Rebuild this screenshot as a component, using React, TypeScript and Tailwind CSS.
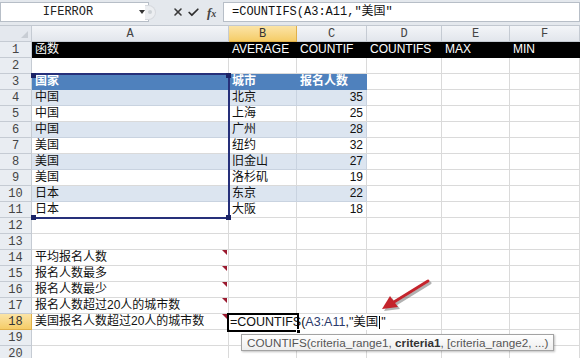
import { X, Check } from "lucide-react";

const colW = ["w-[197px]", "w-[68px]", "w-[70px]", "w-[75px]", "w-[68px]", "w-[70px]"];
const letters = ["A", "B", "C", "D", "E", "F"];

const table: [string, string, string][] = [
  ["中国", "北京", "35"],
  ["中国", "上海", "25"],
  ["中国", "广州", "28"],
  ["美国", "纽约", "32"],
  ["美国", "旧金山", "27"],
  ["美国", "洛杉矶", "19"],
  ["日本", "东京", "22"],
  ["日本", "大阪", "18"],
];

const labels: Record<number, string> = {
  14: "平均报名人数",
  15: "报名人数最多",
  16: "报名人数最少",
  17: "报名人数超过20人的城市数",
  18: "美国报名人数超过20人的城市数",
};

const mono = "font-['Liberation_Mono','Noto_Sans_CJK_SC',monospace]";

function RowHead({ n }: { n: number }) {
  const active = n === 18;
  return (
    <div
      className={`w-[32px] h-[16px] shrink-0 flex items-center justify-center border-r border-b text-[12px] leading-none ${mono} ${
        active
          ? "bg-gradient-to-b from-[#fbe4a6] to-[#f5cc66] border-[#e0b04a] text-[#333]"
          : "bg-[#e9edf2] border-[#c5cbd3] text-[#444]"
      }`}
    >
      {n}
    </div>
  );
}

function Cell({
  w,
  children,
  cls = "bg-white border-[#dadada]",
  right = false,
}: {
  w: string;
  children?: React.ReactNode;
  cls?: string;
  right?: boolean;
}) {
  return (
    <div
      className={`${w} h-[16px] shrink-0 border-r border-b flex items-end pb-[1px] px-[3px] text-[12px] leading-[14px] whitespace-nowrap overflow-visible relative ${
        right ? "justify-end" : ""
      } ${cls}`}
    >
      {children}
    </div>
  );
}

function Row({ n }: { n: number }) {
  let cells: React.ReactNode[] = [];
  if (n === 1) {
    const t = ["函数", "AVERAGE", "COUNTIF", "COUNTIFS", "MAX", "MIN"];
    cells = t.map((s, i) => (
      <Cell key={i} w={colW[i]} cls="bg-black border-black text-white">
        {s}
      </Cell>
    ));
  } else if (n === 3) {
    const t = ["国家", "城市", "报名人数"];
    cells = colW.map((w, i) =>
      i < 3 ? (
        <Cell key={i} w={w} cls="bg-[#4f81bd] border-[#4f81bd] text-white font-bold">
          {t[i]}
        </Cell>
      ) : (
        <Cell key={i} w={w} />
      )
    );
  } else if (n >= 4 && n <= 11) {
    const r = table[n - 4];
    const band = n % 2 === 0 ? "bg-[#dce5f0] border-[#c9d3e0]" : "bg-white border-[#dadada]";
    cells = colW.map((w, i) =>
      i < 3 ? (
        <Cell key={i} w={w} cls={`${band} text-[#111]`} right={i === 2}>
          {r[i]}
        </Cell>
      ) : (
        <Cell key={i} w={w} />
      )
    );
  } else {
    cells = colW.map((w, i) => (
      <Cell key={i} w={w} cls="bg-white border-[#dadada] text-[#111]">
        {i === 0 && labels[n]}
        {i === 0 && labels[n] && (
          <span className="absolute right-[1px] top-0 w-0 h-0 border-l-[5px] border-l-transparent border-t-[5px] border-t-[#9b1b30]" />
        )}
      </Cell>
    ));
  }
  return (
    <div className="flex">
      <RowHead n={n} />
      {cells}
    </div>
  );
}

export default function App() {
  const rows = Array.from({ length: 20 }, (_, i) => i + 1);
  return (
    <div className="w-[580px] h-[358px] overflow-hidden bg-white relative font-['Liberation_Sans','Noto_Sans_CJK_SC',sans-serif]">
      {/* formula bar */}
      <div className="h-[26px] flex items-start pt-[2px] bg-[#e4e8ed] border-b border-[#c2c8d0]">
        <div className={`w-[149px] h-[20px] bg-white border border-[#b7bec7] flex items-center ${mono} text-[12px] text-[#222]`}>
          <span className="w-[134px] text-center">IFERROR</span>
          <span className="w-0 h-0 ml-[4px] border-l-[3px] border-r-[3px] border-t-[4px] border-l-transparent border-r-transparent border-t-[#333]" />
        </div>
        <div className="w-[74px] h-[20px] flex items-center">
          <span className="w-[11px] h-[15px] -ml-[4px] rounded-r-full border border-l-0 border-[#d6d9de] bg-[#eceef1] flex items-center justify-center">
            <span className="w-[4px] h-[4px] rounded-full bg-[#cdd1d6]" />
          </span>
          <div className="flex items-center gap-[3px] ml-[16px]">
            <X size={12} strokeWidth={3.2} className="text-[#3a3a3a]" />
            <Check size={13} strokeWidth={3.2} className="text-[#2e2e2e]" />
            <span className="ml-[4px] font-['Liberation_Serif',serif] italic font-bold text-[13px] text-[#444] leading-none">
              f<span className="text-[10px]">x</span>
            </span>
          </div>
        </div>
        <div className={`flex-1 h-[20px] bg-white border border-[#b7bec7] flex items-center pl-[8px] ${mono} text-[12px] text-[#111] whitespace-nowrap`}>
          =COUNTIFS(A3:A11,"美国"
        </div>
      </div>

      {/* column headers */}
      <div className="flex">
        <div className="w-[32px] h-[16px] shrink-0 bg-[#e4e8ee] border-r border-b border-[#c5cbd3] flex items-end justify-end pr-[3px] pb-[3px]">
          <span className="w-0 h-0 border-l-[7px] border-l-transparent border-b-[7px] border-b-[#c8cdd4]" />
        </div>
        {colW.map((w, i) => (
          <div
            key={i}
            className={`${w} h-[16px] shrink-0 border-r border-b flex items-center justify-center text-[12px] ${mono} ${
              i === 1
                ? "bg-gradient-to-b from-[#fbe4a6] to-[#f5cc66] border-[#e0b04a] text-[#333]"
                : "bg-gradient-to-b from-[#f3f5f8] to-[#e2e6ec] border-[#c5cbd3] text-[#444]"
            }`}
          >
            {letters[i]}
          </div>
        ))}
      </div>

      {rows.map((n) => (
        <Row key={n} n={n} />
      ))}

      {/* range highlight A3:A11 */}
      <div className="absolute left-[32px] top-[73px] w-[198px] h-[146px] border-t-2 border-r-2 border-b-2 border-[#26307a] pointer-events-none">
        <span className="absolute -left-[1px] -top-[2px] w-[5px] h-[5px] bg-[#1b2366]" />
        <span className="absolute -right-[3px] -top-[2px] w-[5px] h-[5px] bg-[#1b2366]" />
        <span className="absolute -left-[1px] -bottom-[3px] w-[5px] h-[5px] bg-[#1b2366]" />
        <span className="absolute -right-[3px] -bottom-[3px] w-[5px] h-[5px] bg-[#1b2366]" />
      </div>

      {/* in-cell edit text B18 */}
      <div className="absolute left-[230px] top-[314px] h-[16px] pr-[4px] bg-white flex items-end pb-[1px] text-[12.5px] leading-[14px] text-[#111] whitespace-nowrap">
        =COUNTIFS(<span className="text-[#2b3a6b]">A3:A11</span>,"美国
        <span className="inline-block w-[1px] h-[13px] bg-black mx-[1px]" />"
      </div>
      <div className="absolute left-[227px] top-[313px] w-[72px] h-[19px] border-2 border-black pointer-events-none">
        <span className="absolute -right-[4px] -bottom-[4px] w-[5px] h-[5px] bg-black border border-white" />
      </div>

      {/* function tooltip */}
      <div className="absolute left-[241px] top-[334px] h-[17px] px-[5px] flex items-center bg-gradient-to-b from-white to-[#eeeeee] border border-[#a3a3a3] shadow-[1px_1px_2px_rgba(0,0,0,0.25)] text-[11.7px] text-[#555] whitespace-nowrap">
        COUNTIFS(criteria_range1,&nbsp;<b className="text-[#333]">criteria1</b>, [criteria_range2, ...)
      </div>

      {/* red arrow */}
      <svg className="absolute left-[376px] top-[276px]" width="60" height="40" viewBox="0 0 60 40">
        <g transform="translate(2,2)" opacity="0.3">
          <line x1="52" y1="5" x2="18" y2="26" stroke="#000" strokeWidth="3" strokeLinecap="round" />
          <polygon points="6,33 14,20 22,31" fill="#000" />
        </g>
        <line x1="52" y1="5" x2="18" y2="26" stroke="#c4242c" strokeWidth="3" strokeLinecap="round" />
        <polygon points="6,33 14,20 22,31" fill="#c4242c" />
      </svg>
    </div>
  );
}
